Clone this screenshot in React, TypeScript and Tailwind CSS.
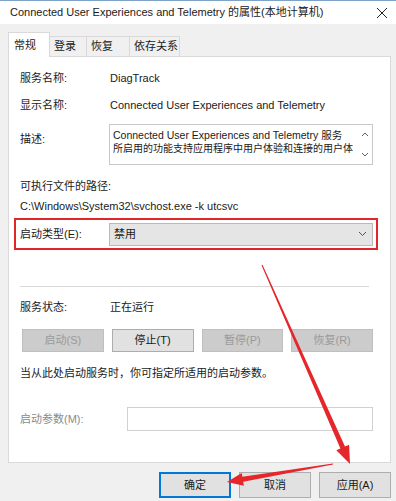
const font = "font-['Liberation_Sans','Noto_Sans_CJK_SC',sans-serif]";

function Row({ label, children }: { label: string; children?: React.ReactNode }) {
  return (
    <div className="flex h-[20px] items-center pl-[11px]">
      <div className="w-[90px] shrink-0">{label}</div>
      {children}
    </div>
  );
}

function Btn({ label, disabled }: { label: string; disabled?: boolean }) {
  if (disabled) {
    return (
      <div className="flex h-[23px] items-center justify-center border border-[#bfbfbf] bg-[#cccccc] text-[#9a9a9a]">
        {label}
      </div>
    );
  }
  return (
    <div className="flex h-[23px] items-center justify-center border border-[#adadad] bg-[#e1e1e1]">{label}</div>
  );
}

function Arrows() {
  return (
    <svg className="pointer-events-none absolute left-0 top-0" width="396" height="501" viewBox="0 0 396 501">
      <polygon
        fill="#e5262b"
        points="262.5,264.8 261.5,265.2 340.4,448.5 336.3,450.3 350,464 349.1,444.7 345,446.5"
      />
      <polygon
        fill="#e5262b"
        points="333.1,464.5 332.9,463.5 242.4,476.8 241.7,472.9 227,482 243.9,485.7 243.2,481.8"
      />
    </svg>
  );
}

export default function App() {
  return (
    <div className={`relative h-[501px] w-[396px] overflow-hidden whitespace-nowrap bg-[#f0f0f0] text-[11px] text-[#1a1a1a] ${font}`}>
      {/* title bar */}
      <div className="flex h-[24px] items-center justify-between border-t border-[#7fa3c6] bg-white pl-[10px] pr-[6px]">
        <span className="text-[11px]">Connected User Experiences and Telemetry 的属性(本地计算机)</span>
        <svg width="12" height="12" viewBox="0 0 12 12" className="mr-[2px]">
          <path d="M1 1 L11 11 M11 1 L1 11" stroke="#222" strokeWidth="1" />
        </svg>
      </div>

      {/* tabs */}
      <div className="flex h-[32px] items-end pl-[8px]">
        <div className="relative z-10 -mb-px flex h-[25px] w-[42px] items-start border border-b-0 border-[#d9d9d9] bg-white pl-[5px] pt-[4px]">
          常规
        </div>
        <div className="flex h-[20px] w-[37px] items-center border-t border-r border-[#d9d9d9] pl-[4px]">登录</div>
        <div className="flex h-[20px] w-[43px] items-center border-t border-r border-[#d9d9d9] pl-[4px]">恢复</div>
        <div className="flex h-[20px] w-[50px] items-center border-t border-r border-[#d9d9d9] pl-[4px]">依存关系</div>
      </div>

      {/* panel */}
      <div className="ml-[8px] h-[407px] w-[383px] border border-[#d9d9d9] bg-white">
        <div className="mt-[11px]">
          <Row label="服务名称:">DiagTrack</Row>
        </div>
        <div className="mt-[7px]">
          <Row label="显示名称:">Connected User Experiences and Telemetry</Row>
        </div>
        <div className="mt-[9px] flex items-start pl-[11px]">
          <div className="w-[89px] shrink-0 pt-[7px]">描述:</div>
          <div className="relative h-[41px] w-[264px] border border-[#c8c8c8] pl-[3px] pr-[14px] leading-[14px]">
            <div className="pt-[3px] text-[10.5px]">Connected User Experiences and Telemetry 服务</div>
            <div className="text-[10px]">所启用的功能支持应用程序中用户体验和连接的用户体</div>
            <svg className="absolute right-[3px] top-[6px]" width="8" height="6" viewBox="0 0 8 6">
              <path d="M1 5 L4 2 L7 5" fill="none" stroke="#606060" strokeWidth="1" />
            </svg>
            <svg className="absolute bottom-[6px] right-[3px]" width="8" height="6" viewBox="0 0 8 6">
              <path d="M1 1 L4 4 L7 1" fill="none" stroke="#606060" strokeWidth="1" />
            </svg>
          </div>
        </div>
        <div className="mt-[11px] flex h-[20px] items-center pl-[11px]">可执行文件的路径:</div>
        <div className="flex h-[20px] items-center pl-[11px]">C:\Windows\System32\svchost.exe -k utcsvc</div>

        <div className="ml-[5px] mt-[2px] flex h-[32px] w-[364px] items-center border-2 border-[#e1262b] pl-[4px]">
          <div className="w-[89px] shrink-0">启动类型(E):</div>
          <div className="flex h-[23px] w-[264px] items-center justify-between border border-[#b9b9b9] bg-[#e5e5e5] pl-[4px] pr-[5px]">
            <span>禁用</span>
            <svg width="9" height="6" viewBox="0 0 9 6">
              <path d="M1 1 L4.5 4.5 L8 1" fill="none" stroke="#555" strokeWidth="1" />
            </svg>
          </div>
        </div>

        <div className="ml-[11px] mt-[36px] h-px w-[349px] bg-[#d9d9d9]" />

        <div className="mt-[10px]">
          <Row label="服务状态:">正在运行</Row>
        </div>

        <div className="mt-[12px] grid w-[364px] grid-cols-4 gap-x-[8px] pl-[13px]">
          <Btn label="启动(S)" disabled />
          <Btn label="停止(T)" />
          <Btn label="暂停(P)" disabled />
          <Btn label="恢复(R)" disabled />
        </div>

        <div className="mt-[11px] flex h-[20px] items-center pl-[11px]">当从此处启动服务时，你可指定所适用的启动参数。</div>

        <div className="mt-[24px] flex items-center pl-[11px]">
          <div className="w-[107px] shrink-0 text-[#8a8a8a]">启动参数(M):</div>
          <div className="h-[24px] w-[246px] border border-[#d0d0d0] bg-white" />
        </div>
      </div>

      {/* footer buttons */}
      <div className="mt-[9px] flex justify-end gap-x-[8px] pr-[5px]">
        <div className="flex h-[26px] w-[72px] items-center justify-center border-2 border-[#0078d7] bg-[#e1e1e1]">确定</div>
        <div className="flex h-[26px] w-[72px] items-center justify-center border border-[#adadad] bg-[#e1e1e1]">取消</div>
        <div className="flex h-[26px] w-[72px] items-center justify-center border border-[#adadad] bg-[#e1e1e1]">应用(A)</div>
      </div>

      <Arrows />
    </div>
  );
}
